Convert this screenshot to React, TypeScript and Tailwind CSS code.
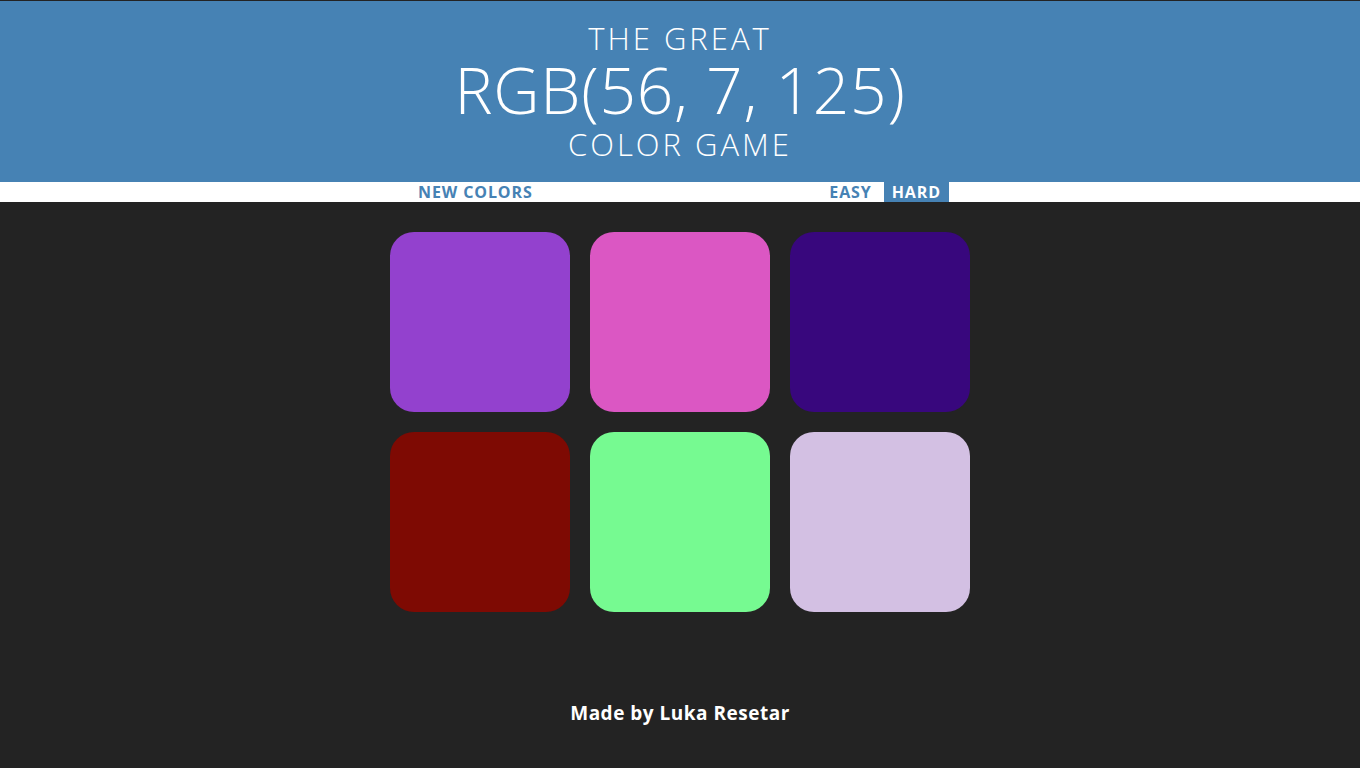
const squares = ["#9341ce", "#db57c3", "#38077d", "#7e0a03", "#76fa91", "#d3c0e3"]

export default function App() {
    return (
        <div className="min-h-screen bg-[#232323] border-t border-[#232323]">
            <h1 className="bg-[#4682b4] text-white text-center font-light uppercase pt-[19px] pb-[20px] font-['Open_Sans',sans-serif]">
                <span className="block text-[31px] leading-[36px] tracking-[3px]">The Great</span>
                <span className="block text-[64px] leading-[68px] tracking-[0.8px]">RGB(56, 7, 125)</span>
                <span className="block mt-[2px] text-[31px] leading-[36px] tracking-[3px]">Color Game</span>
            </h1>
            <div className="bg-white h-5">
                <div className="w-[600px] mx-auto flex h-5 items-center font-['Open_Sans',sans-serif] font-bold text-[16px] text-[#4682b4] tracking-[0.9px]">
                    <button className="ml-[38px] px-0 h-5 leading-5 uppercase">New Colors</button>
                    <div className="flex-1" />
                    <button className="px-[6px] mr-[6px] h-5 leading-5 uppercase">Easy</button>
                    <button className="px-[8px] h-5 leading-5 bg-[#4682b4] text-white mr-[31px] uppercase">Hard</button>
                </div>
            </div>
            <div className="w-[600px] mx-auto grid grid-cols-3 gap-5 px-[10px] pt-[30px]">
                {squares.map((c) => (
                    <div key={c} className="w-[180px] h-[180px] rounded-[24px]" style={{ backgroundColor: c }} />
                ))}
            </div>
            <p className="text-center text-white font-bold text-[19px] leading-[28px] tracking-[0.5px] mt-[87px] font-['Open_Sans',sans-serif]">
                Made by Luka Resetar
            </p>
        </div>
    )
}
